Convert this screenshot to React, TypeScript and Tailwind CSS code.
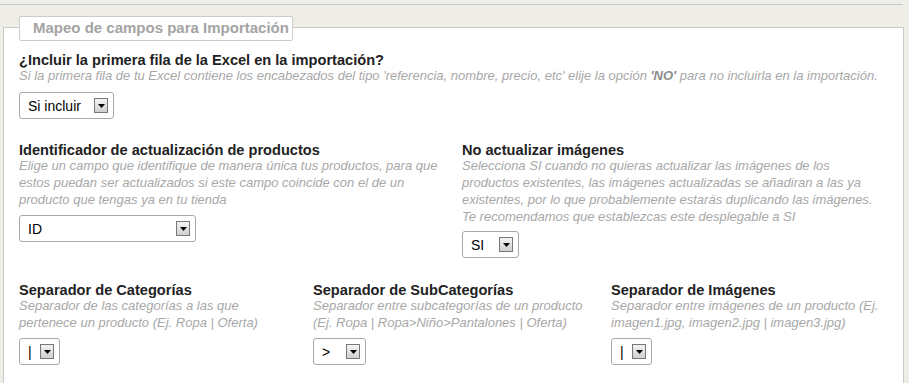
import React from 'react';

interface FakeSelectProps {
    value: string;
    width: number;
}

const widthClass: Record<number, string> = {
    94: 'w-[95px]',
    177: 'w-[177px]',
    57: 'w-[57px]',
    41: 'w-[41px]',
    53: 'w-[53px]',
};

const FakeSelect = ({ value, width }: FakeSelectProps) => (
    <div
        className={`flex h-[27px] items-center rounded-[3px] border border-[#a9a9a9] bg-white pl-[8px] pr-[5px] ${widthClass[width]}`}
    >
        <span className="text-[14px] leading-none text-black">{value}</span>
        <span className="ml-auto flex h-[15px] w-[14px] items-center justify-center border border-[#777] bg-gradient-to-b from-[#f4f4f4] to-[#cfcfcf]">
            <svg width="7" height="4" viewBox="0 0 7 4">
                <path d="M0 0h7L3.5 4z" fill="#000" />
            </svg>
        </span>
    </div>
);

interface FieldProps {
    title: string;
    descClass?: string;
    children: React.ReactNode;
}

const Field = ({ title, descClass = '-mt-[2px]', children }: FieldProps) => (
    <div>
        <div className="text-[14.6px] font-bold leading-[17px] text-[#222]">
            {title}
        </div>
        <p
            className={`text-[13px] italic leading-[17px] text-[#a8a8a8] ${descClass}`}
        >
            {children}
        </p>
    </div>
);

const App = () => {
    return (
        <div
            className="h-[383px] w-[909px] overflow-hidden bg-[#eeede8] pt-[4px]"
            style={{ fontFamily: '"Liberation Sans", Arial, sans-serif' }}
        >
            <div className="w-[903px] border-t border-[#c9c9c9]" />

            <div className="relative ml-[3px] mt-[22px] h-[400px] w-[901px] border border-[#c9c9c9] bg-white pl-[15px] pt-[24px]">
                <div className="absolute -top-[12px] left-[15px] flex h-[25px] w-[274px] items-center rounded-[2px] border border-[#cdcdcd] bg-white pl-[13px]">
                    <span className="text-[15px] font-bold text-[#a4a4a4]">
                        Mapeo de campos para Importación
                    </span>
                </div>

                {/* Primera fila */}
                <Field title="¿Incluir la primera fila de la Excel en la importación?">
                    Si la primera fila de tu Excel contiene los encabezados del
                    tipo 'referencia, nombre, precio, etc' elije la opción{' '}
                    <b className="text-[#8c8c8c]">'NO'</b> para no incluirla en
                    la importación.
                </Field>
                <div className="mt-[8px]">
                    <FakeSelect value="Si incluir" width={94} />
                </div>

                {/* Actualización */}
                <div className="mt-[23px] flex">
                    <div className="w-[443px] pr-[20px]">
                        <Field title="Identificador de actualización de productos">
                            Elige un campo que identifique de manera única tus
                            productos, para que estos puedan ser actualizados si
                            este campo coincide con el de un producto que tengas
                            ya en tu tienda
                        </Field>
                        <div className="mt-[7px]">
                            <FakeSelect value="ID" width={177} />
                        </div>
                    </div>
                    <div className="w-[420px]">
                        <Field title="No actualizar imágenes">
                            Selecciona SI cuando no quieras actualizar las
                            imágenes de los productos existentes, las imágenes
                            actualizadas se añadiran a las ya existentes, por lo
                            que probablemente estarás duplicando las imágenes. Te
                            recomendamos que establezcas este desplegable a SI
                        </Field>
                        <div className="mt-[6px]">
                            <FakeSelect value="SI" width={57} />
                        </div>
                    </div>
                </div>

                {/* Separadores */}
                <div className="mt-[24px] flex">
                    <div className="w-[294px] pr-[20px]">
                        <Field title="Separador de Categorías">
                            Separador de las categorías a las que pertenece un
                            producto (Ej. Ropa | Oferta)
                        </Field>
                        <div className="mt-[7px]">
                            <FakeSelect value="|" width={41} />
                        </div>
                    </div>
                    <div className="w-[298px] pr-[20px]">
                        <Field title="Separador de SubCategorías">
                            Separador entre subcategorías de un producto (Ej.
                            Ropa | Ropa&gt;Niño&gt;Pantalones | Oferta)
                        </Field>
                        <div className="mt-[7px]">
                            <FakeSelect value=">" width={53} />
                        </div>
                    </div>
                    <div className="w-[272px]">
                        <Field title="Separador de Imágenes">
                            Separador entre imágenes de un producto (Ej.
                            imagen1.jpg, imagen2.jpg | imagen3.jpg)
                        </Field>
                        <div className="mt-[7px]">
                            <FakeSelect value="|" width={41} />
                        </div>
                    </div>
                </div>
            </div>
        </div>
    );
};

export default App;
